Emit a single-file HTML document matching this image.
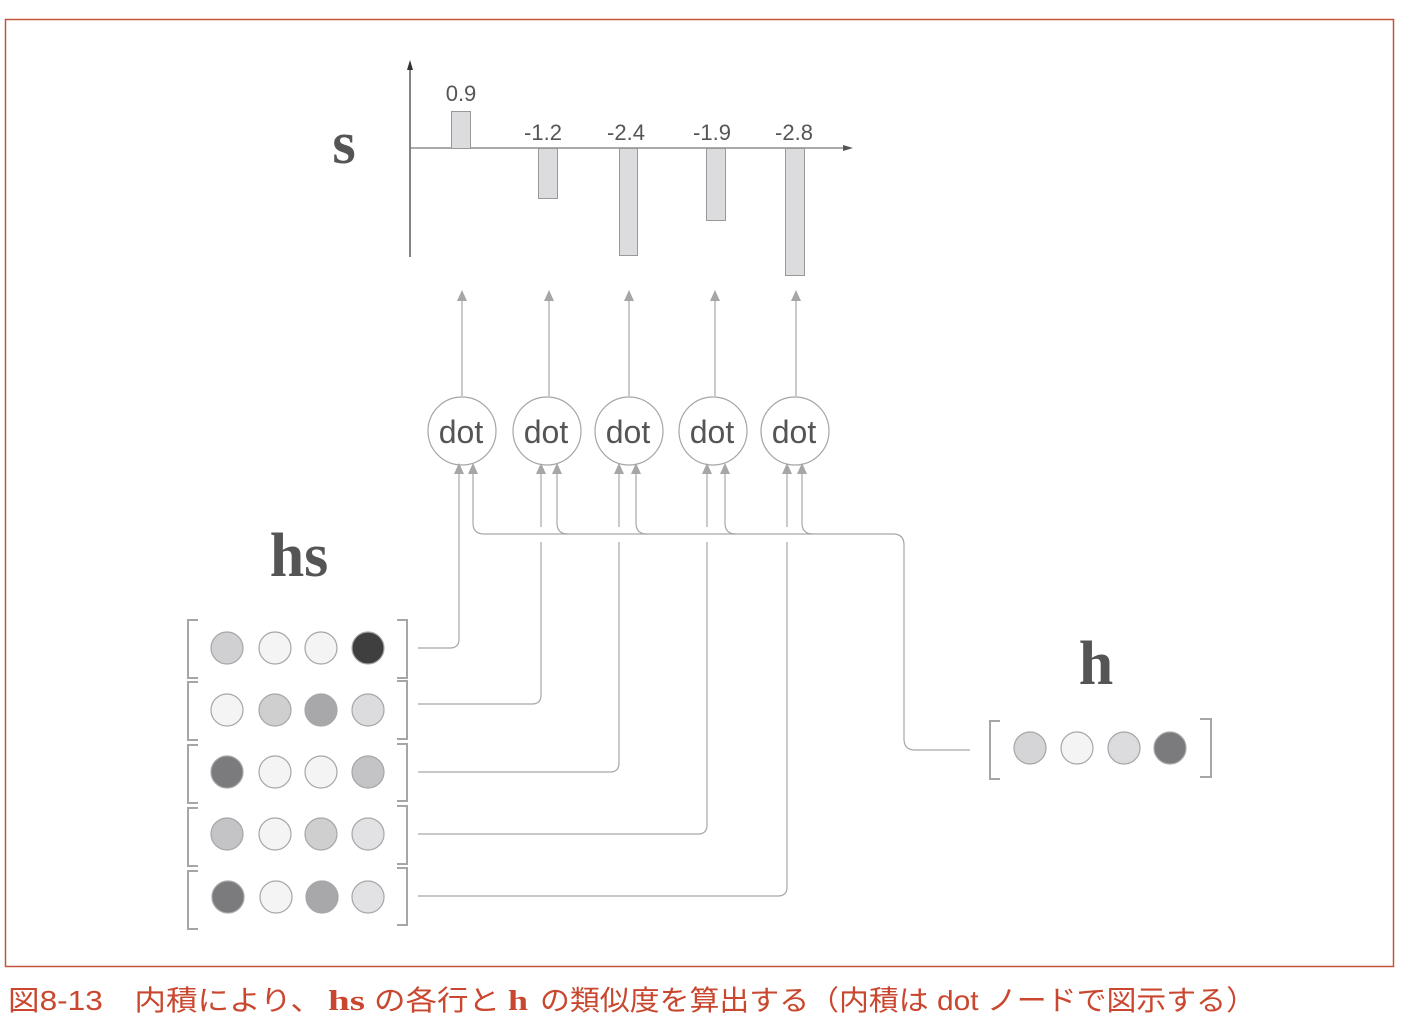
<!DOCTYPE html>
<html><head><meta charset="utf-8"><style>html,body{margin:0;padding:0;background:#fff}svg{display:block}</style></head>
<body>
<svg width="1406" height="1034" viewBox="0 0 1406 1034" xmlns="http://www.w3.org/2000/svg">
<defs>
<marker id="ah" markerWidth="11" markerHeight="10" refX="10" refY="5" orient="auto" markerUnits="userSpaceOnUse" viewBox="0 0 11 10"><path d="M0,0 L11,5 L0,10 Z" fill="#a6a6a8"/></marker>
</defs>
<path d="M5.5,967 V19.5 H1393.5 V966.5 H5" fill="none" stroke="#c4553c" stroke-width="1.5"/>

<line x1="410" y1="62" x2="410" y2="257" stroke="#333" stroke-width="1.2"/>
<path d="M407,70 L410,60 L413,70 Z" fill="#333"/>
<line x1="410" y1="148" x2="846" y2="148" stroke="#777" stroke-width="1.2"/>
<path d="M843,145 L853,148 L843,151 Z" fill="#555"/>
<g fill="#dcdcde" stroke="#999" stroke-width="1">
<rect x="451.5" y="111.5" width="19" height="37"/>
<rect x="538.5" y="148.5" width="19" height="50"/>
<rect x="619.5" y="148.5" width="18" height="107"/>
<rect x="706.5" y="148.5" width="19" height="72"/>
<rect x="785.5" y="148.5" width="19" height="127"/>
</g>
<g font-family="Liberation Sans, sans-serif" font-size="22" fill="#555" text-anchor="middle">
<text x="461" y="101">0.9</text>
<text x="543" y="140">-1.2</text>
<text x="626" y="140">-2.4</text>
<text x="712" y="140">-1.9</text>
<text x="794" y="140">-2.8</text>
</g>
<text x="344" y="163" font-family="Liberation Serif, serif" font-weight="bold" font-size="60" fill="#555" text-anchor="middle">s</text>
<text x="299" y="576" font-family="Liberation Serif, serif" font-weight="bold" font-size="62" fill="#555" text-anchor="middle">hs</text>
<text x="1096" y="684" font-family="Liberation Serif, serif" font-weight="bold" font-size="62" fill="#555" text-anchor="middle">h</text>

<g stroke="#a6a6a8" stroke-width="1.2" fill="none">
<line x1="462" y1="396" x2="462" y2="291" marker-end="url(#ah)"/>
<line x1="549" y1="396" x2="549" y2="291" marker-end="url(#ah)"/>
<line x1="629" y1="396" x2="629" y2="291" marker-end="url(#ah)"/>
<line x1="715" y1="396" x2="715" y2="291" marker-end="url(#ah)"/>
<line x1="796" y1="396" x2="796" y2="291" marker-end="url(#ah)"/>
</g>
<g fill="#fff" stroke="#a6a6a8" stroke-width="1.2">
<circle cx="462" cy="431" r="34"/>
<circle cx="547" cy="431" r="34"/>
<circle cx="629" cy="431" r="34"/>
<circle cx="713" cy="431" r="34"/>
<circle cx="795" cy="431" r="34"/>
</g>
<g font-family="Liberation Sans, sans-serif" font-size="32" fill="#555" text-anchor="middle">
<text x="461" y="443">dot</text>
<text x="546" y="443">dot</text>
<text x="628" y="443">dot</text>
<text x="712" y="443">dot</text>
<text x="794" y="443">dot</text>
</g>

<g stroke="#a6a6a8" stroke-width="1.2" fill="none">
<path d="M970,750 H915 Q904,750 904,739 V545 Q904,534 893,534 H484 Q473,534 473,523 V464" marker-end="url(#ah)"/>
<path d="M568,534 Q557,534 557,523 V464" marker-end="url(#ah)"/>
<path d="M647,534 Q636,534 636,523 V464" marker-end="url(#ah)"/>
<path d="M736,534 Q725,534 725,523 V464" marker-end="url(#ah)"/>
<path d="M813,534 Q802,534 802,523 V464" marker-end="url(#ah)"/>
<path d="M418,648 H450 Q459,648 459,639 V464" marker-end="url(#ah)"/>
<path d="M418,704 H532 Q541,704 541,695 V542"/>
<line x1="541" y1="527" x2="541" y2="464" marker-end="url(#ah)"/>
<path d="M418,772 H610 Q619,772 619,763 V542"/>
<line x1="619" y1="527" x2="619" y2="464" marker-end="url(#ah)"/>
<path d="M418,834 H698 Q707,834 707,825 V542"/>
<line x1="707" y1="527" x2="707" y2="464" marker-end="url(#ah)"/>
<path d="M418,896 H778 Q787,896 787,887 V542"/>
<line x1="787" y1="527" x2="787" y2="464" marker-end="url(#ah)"/>
</g>

<g stroke="#a6a6a8" stroke-width="2" fill="none">
<path d="M198,620 H188 V678 H198"/><path d="M397,620 H407 V678 H397"/>
<path d="M198,682 H188 V740 H198"/><path d="M397,681 H407 V739 H397"/>
<path d="M198,745 H188 V803 H198"/><path d="M397,744 H407 V801 H397"/>
<path d="M198,808 H188 V866 H198"/><path d="M397,806 H407 V864 H397"/>
<path d="M198,871 H188 V929 H198"/><path d="M397,868 H407 V925 H397"/>
<path d="M1000,721 H990 V779 H1000"/><path d="M1200,719 H1211 V777 H1200"/>
</g>
<g stroke="#a6a6a8" stroke-width="1.2">
<circle cx="227" cy="648" r="16" fill="#d0d0d2"/><circle cx="275" cy="648" r="16" fill="#f4f4f4"/><circle cx="321" cy="648" r="16" fill="#f4f4f4"/><circle cx="368" cy="648" r="16" fill="#3f3f3f"/>
<circle cx="227" cy="710" r="16" fill="#f4f4f4"/><circle cx="275" cy="710" r="16" fill="#cfcfd0"/><circle cx="321" cy="710" r="16" fill="#a8a8aa"/><circle cx="368" cy="710" r="16" fill="#dcdcde"/>
<circle cx="227" cy="772" r="16" fill="#7b7b7e"/><circle cx="275" cy="772" r="16" fill="#f4f4f4"/><circle cx="321" cy="772" r="16" fill="#f4f4f4"/><circle cx="368" cy="772" r="16" fill="#c4c4c6"/>
<circle cx="227" cy="834" r="16" fill="#c4c4c6"/><circle cx="275" cy="834" r="16" fill="#f4f4f4"/><circle cx="321" cy="834" r="16" fill="#cfcfd0"/><circle cx="368" cy="834" r="16" fill="#e2e2e4"/>
<circle cx="228" cy="897" r="16" fill="#7b7b7e"/><circle cx="276" cy="897" r="16" fill="#f4f4f4"/><circle cx="322" cy="897" r="16" fill="#a8a8aa"/><circle cx="368" cy="897" r="16" fill="#e2e2e4"/>
<circle cx="1030" cy="748" r="16" fill="#d5d5d7"/><circle cx="1077" cy="748" r="16" fill="#f4f4f4"/><circle cx="1124" cy="748" r="16" fill="#dcdcde"/><circle cx="1170" cy="748" r="16" fill="#7b7b7e"/>
</g>

<g fill="#c9472e" font-size="28">
<text x="8" y="1010" font-family="Liberation Sans, Noto Sans CJK JP, sans-serif" textLength="314" lengthAdjust="spacingAndGlyphs">図8-13　内積により、</text>
<text x="328" y="1010" font-family="Liberation Serif, serif" font-weight="bold" textLength="37" lengthAdjust="spacingAndGlyphs">hs</text>
<text x="374" y="1010" font-family="Liberation Sans, Noto Sans CJK JP, sans-serif" textLength="126" lengthAdjust="spacingAndGlyphs">の各行と</text>
<text x="508" y="1010" font-family="Liberation Serif, serif" font-weight="bold" textLength="20" lengthAdjust="spacingAndGlyphs">h</text>
<text x="540" y="1010" font-family="Liberation Sans, Noto Sans CJK JP, sans-serif" textLength="716" lengthAdjust="spacingAndGlyphs">の類似度を算出する（内積は dot ノードで図示する）</text>
</g>
</svg>
</body></html>
